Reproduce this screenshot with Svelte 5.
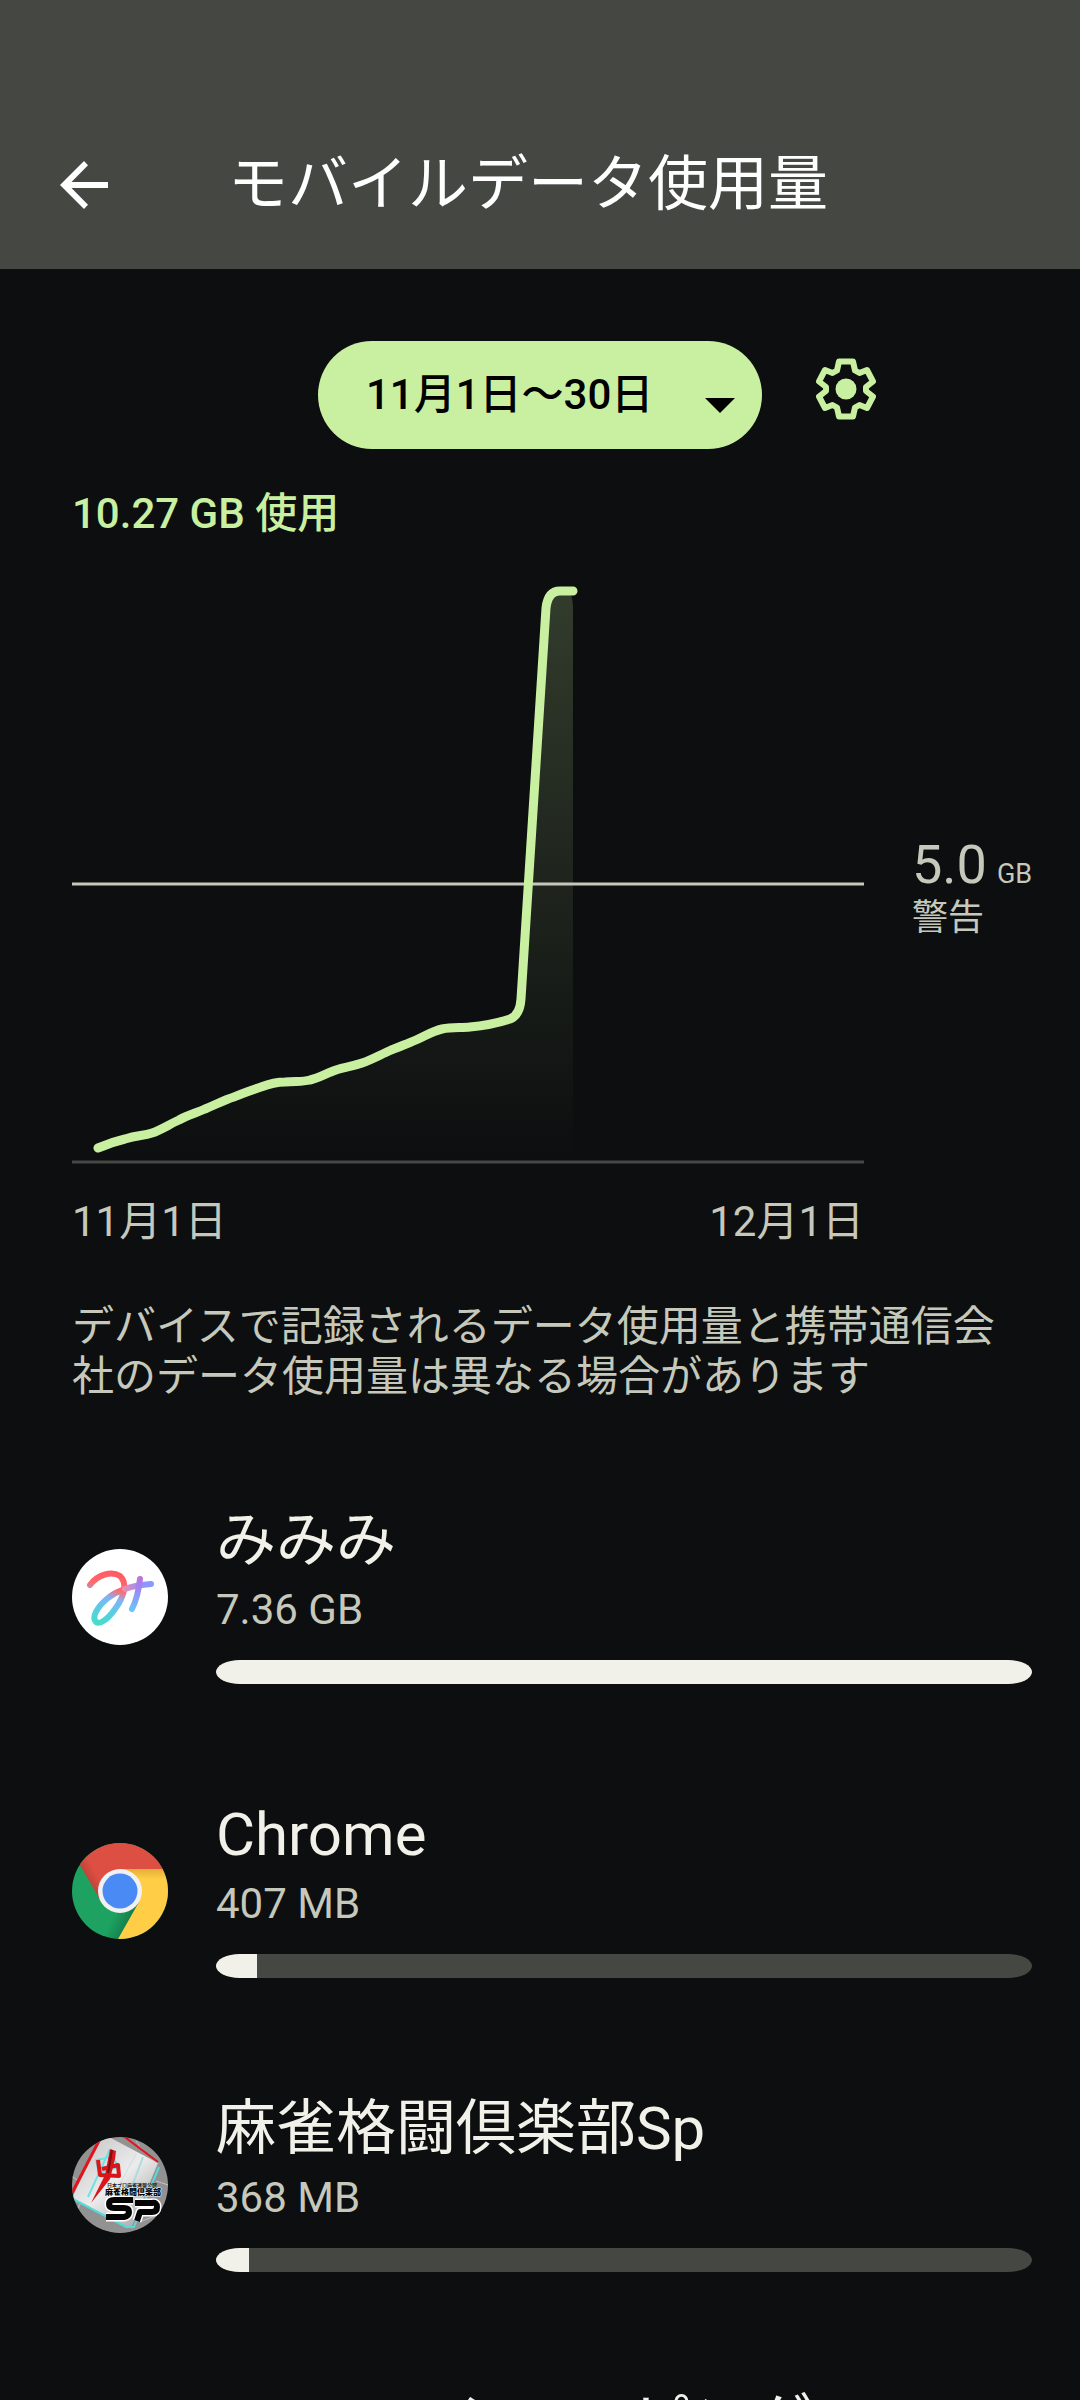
<script>
    const apps = [
        { name: 'みみみ', usage: '7.36 GB', percent: 100, icon: 'mimimi' },
        { name: 'Chrome', usage: '407 MB', percent: 5, icon: 'chrome' },
        { name: '麻雀格闘倶楽部Sp', usage: '368 MB', percent: 4, icon: 'mahjong' },
        { name: 'Amazon ショッピング', usage: '', percent: 0, icon: '' }
    ]
    const periods = ['11月1日～30日']
    const usageLine = 'M26 577Q40 571 53 568C66 564 71 565 80 562C89 559 98 553 107 549C116 544 124 542 133 538C143 534 152 529 162 526C171 522 180 519 189 516Q202 511 213 511C224 510 230 511 238 509C247 507 255 502 264 499C273 496 282 495 290 492C299 489 308 484 317 480C326 476 335 473 344 469C353 465 361 460 370 458C380 456 389 457 398 456Q420 454 438 448Q448 444 449 428L474 37Q476 20 488 20'
    let period = periods[0]
</script>

<div class="screen">
    <header>
        <button class="back" aria-label="戻る">
            <svg width="48" height="48" viewBox="0 0 48 48">
                <path d="M48 21H11.5L28 4.2 24 0 0 24 24 48 28 43.8 11.5 27H48Z" fill="#fff" />
            </svg>
        </button>
        <h1>モバイルデータ使用量</h1>
    </header>

    <main>
        <div class="cycle">
            <div class="picker">
                <select aria-label="期間" bind:value={period}>
                    {#each periods as item}
                        <option value={item}>{item}</option>
                    {/each}
                </select>
                <svg class="arrow" width="30" height="15" viewBox="0 0 30 15">
                    <path d="M0 0H30L15 15Z" fill="#000" />
                </svg>
            </div>
            <button class="settings" aria-label="設定">
                <svg width="60" height="62" viewBox="1 0 60 62" fill="none">
                    <path d="M24 3.5H38L40 12.5 44.5 15 52 12 58 23.5 51 29V33L58 38.5 52 50 44.5 47 40 49.5 38 58.5H24L22 49.5 17.5 47 10 50 4 38.5 11 33V29L4 23.5 10 12 17.5 15 22 12.5Z" stroke="#c8f0a0" stroke-width="6" stroke-linejoin="round" />
                    <circle cx="31" cy="31" r="10.5" fill="#c8f0a0" />
                </svg>
            </button>
        </div>

        <p class="total">10.27 GB 使用</p>

        <div class="chart">
            <svg class="plot" viewBox="0 0 792 600">
                <defs>
                    <linearGradient id="area" x1="0" y1="25" x2="0" y2="592" gradientUnits="userSpaceOnUse">
                        <stop offset="0" stop-color="#c8f0a0" stop-opacity="0.2" />
                        <stop offset="1" stop-color="#c8f0a0" stop-opacity="0" />
                    </linearGradient>
                </defs>
                <path d="{usageLine}H494Q501 21 501 38V592H26Z" fill="url(#area)" />
                <path d="M0 313H792" stroke="#c5c8ba" stroke-width="3" />
                <path d="M0 591H792" stroke="#454743" stroke-width="3" />
                <path d="{usageLine}H501" fill="none" stroke="#c8f0a0" stroke-width="9" stroke-linecap="round" stroke-linejoin="round" />
            </svg>
            <div class="limit">
                <div class="amount">5.0 <small>GB</small></div>
                <div>警告</div>
            </div>
            <div class="dates">
                <span>11月1日</span>
                <span>12月1日</span>
            </div>
        </div>

        <p class="note">デバイスで記録されるデータ使用量と携帯通信会社のデータ使用量は異なる場合があります</p>

        <ul>
            {#each apps as app}
                <li>
                    <div class="icon">
                        {#if app.icon === 'mimimi'}
                            <svg viewBox="0 0 96 96">
                                <defs>
                                    <linearGradient id="swash" x1="44" y1="24" x2="30" y2="76" gradientUnits="userSpaceOnUse">
                                        <stop offset="0" stop-color="#ff5c62" />
                                        <stop offset="0.3" stop-color="#ff6a70" />
                                        <stop offset="0.48" stop-color="#7eb4fa" />
                                        <stop offset="0.75" stop-color="#55cfe0" />
                                        <stop offset="1" stop-color="#48ddc8" />
                                    </linearGradient>
                                    <linearGradient id="bar" x1="50" y1="0" x2="80" y2="0" gradientUnits="userSpaceOnUse">
                                        <stop offset="0" stop-color="#f58ca5" />
                                        <stop offset="0.5" stop-color="#a58cf5" />
                                        <stop offset="1" stop-color="#829bff" />
                                    </linearGradient>
                                    <linearGradient id="stem" x1="68" y1="28" x2="61" y2="62" gradientUnits="userSpaceOnUse">
                                        <stop offset="0" stop-color="#b973dc" />
                                        <stop offset="0.4" stop-color="#9b8cf5" />
                                        <stop offset="1" stop-color="#64c8fa" />
                                    </linearGradient>
                                </defs>
                                <circle cx="48" cy="48" r="48" fill="#fff" />
                                <g fill="none" stroke-width="6" stroke-linecap="round">
                                    <path d="M18 36C26 25 40 22 48 27C56 34 52 48 43 60C36 70 28 76 24 73C19 68 26 57 36 49C43 43 48 42 53 40" stroke="url(#swash)" />
                                    <path d="M53 40Q64 36 79 35" stroke="url(#bar)" />
                                    <path d="M68 30Q66 48 60 60" stroke="url(#stem)" />
                                </g>
                            </svg>
                        {:else if app.icon === 'chrome'}
                            <svg viewBox="0 0 96 96">
                                <defs>
                                    <clipPath id="disc"><circle cx="48" cy="48" r="48" /></clipPath>
                                    <linearGradient id="redShade" x1="10" y1="38" x2="24" y2="30" gradientUnits="userSpaceOnUse">
                                        <stop offset="0" stop-color="#b33b30" />
                                        <stop offset="1" stop-color="#dd4f43" />
                                    </linearGradient>
                                    <linearGradient id="yellowShade" x1="0" y1="26" x2="0" y2="36" gradientUnits="userSpaceOnUse">
                                        <stop offset="0" stop-color="#e5ae37" />
                                        <stop offset="1" stop-color="#ffcd46" />
                                    </linearGradient>
                                    <linearGradient id="greenShade" x1="58" y1="76" x2="43" y2="69" gradientUnits="userSpaceOnUse">
                                        <stop offset="0" stop-color="#14804c" />
                                        <stop offset="1" stop-color="#1da261" />
                                    </linearGradient>
                                </defs>
                                <g clip-path="url(#disc)">
                                    <rect width="96" height="96" fill="url(#greenShade)" />
                                    <path d="M48 26H96V96H46L67 59Z" fill="url(#yellowShade)" />
                                    <path d="M0 10V0H96V26H48L30 60 8 22Z" fill="url(#redShade)" />
                                </g>
                                <circle cx="48" cy="48" r="22" fill="#f1f1f1" />
                                <circle cx="48" cy="48" r="17.5" fill="#4a8af4" />
                            </svg>
                        {:else if app.icon === 'mahjong'}
                            <svg viewBox="0 0 96 96">
                                <defs>
                                    <clipPath id="tile"><circle cx="48" cy="48" r="48" /></clipPath>
                                    <linearGradient id="face" x1="20" y1="10" x2="80" y2="80" gradientUnits="userSpaceOnUse">
                                        <stop offset="0" stop-color="#cfcfcf" />
                                        <stop offset="0.45" stop-color="#ececec" />
                                        <stop offset="1" stop-color="#a8a8a8" />
                                    </linearGradient>
                                </defs>
                                <g clip-path="url(#tile)">
                                    <rect width="96" height="96" fill="#929292" />
                                    <path d="M-2 38L30 60M0 82L12 60M64 4Q68 10 72 14M84 44L96 48M70 84L86 78" stroke="#c4c4c4" stroke-width="1" />
                                    <path d="M28 2L37 0 86 26 60 89 54 89 0 61Z" fill="url(#face)" />
                                    <path d="M64 17L32 76" stroke="#c9dede" stroke-width="1" />
                                    <path d="M71 20L47 84" stroke="#a9dcdc" stroke-width="2" />
                                    <path d="M1 62L54 90H62L87 30" stroke="#54dada" stroke-width="2" fill="none" />
                                    <path d="M29 0L0 56" stroke="#e3131d" stroke-width="3" />
                                    <path d="M50 -2L86 25" stroke="#e3131d" stroke-width="2" />
                                    <path d="M24 23L27 36 47 30 40 20ZM38 12L16 60" stroke="#6fe3e3" stroke-width="2" fill="none" />
                                    <path d="M26 23L28 38 47 39 46 28 30 32" stroke="#d9151c" stroke-width="4" fill="none" stroke-linejoin="round" />
                                    <path d="M38 12L44 14 43 22 38 42 19 66 33 38Z" fill="#d9151c" />
                                    <path d="M40 13L36 36" stroke="#791014" stroke-width="2" />
                                </g>
                                <text x="35" y="50" class="tiny">日本プロ麻雀連盟公認</text>
                                <text x="33" y="58" class="club">麻雀格闘倶楽部</text>
                                <g fill="none" stroke-linejoin="round">
                                    <path d="M61 63H42Q37 63 37 67T42 71H52Q57 71 57 75T52 80H34M65 84L68 75H80Q85 75 85 70T80 66H63" stroke="#fff" stroke-width="9" />
                                    <path d="M61 63H42Q37 63 37 67T42 71H52Q57 71 57 75T52 80H34M65 84L68 75H80Q85 75 85 70T80 66H63" stroke="#050505" stroke-width="6" />
                                </g>
                            </svg>
                        {/if}
                    </div>
                    <div class="details">
                        <h2>{app.name}</h2>
                        <p>{app.usage}</p>
                        <div class="track">
                            <div class="fill" style="width: {app.percent}%"></div>
                        </div>
                    </div>
                </li>
            {/each}
        </ul>
    </main>
</div>

<style>
    :global(body) {
        margin: 0;
        background: #0c0e0f;
    }
    .screen {
        height: 100vh;
        overflow: hidden;
        background: #0c0e0f;
        color: #c5c8ba;
        font-family: Roboto, "Noto Sans CJK JP", sans-serif;
        font-size: 42px;
        line-height: 50px;
    }
    h1, h2, p, ul {
        margin: 0;
        padding: 0;
        font-weight: 400;
    }
    button {
        padding: 0;
        border: none;
        background: none;
        cursor: pointer;
    }
    svg {
        display: block;
    }
    header {
        display: flex;
        align-items: center;
        gap: 120px;
        padding: 140px 60px 40px;
        background: #454743;
        color: #fff;
    }
    h1 {
        font-size: 60px;
        line-height: 89px;
    }
    .cycle {
        display: flex;
        align-items: center;
        justify-content: center;
        gap: 54px;
        padding: 72px 0 40px 114px;
    }
    .picker {
        position: relative;
    }
    .picker select {
        appearance: none;
        width: 444px;
        height: 108px;
        padding: 0 48px;
        border: none;
        border-radius: 54px;
        background: #c8f0a0;
        color: #000;
        font: inherit;
        font-weight: 500;
    }
    .picker .arrow {
        position: absolute;
        right: 27px;
        bottom: 36px;
        pointer-events: none;
    }
    .settings {
        margin-bottom: 12px;
    }
    .total {
        padding: 0 72px;
        color: #c8f0a0;
        font-weight: 500;
    }
    .chart {
        display: grid;
        grid-template-columns: 1fr 168px;
        column-gap: 48px;
        padding: 32px 0 0 72px;
    }
    .plot {
        width: 100%;
    }
    .limit {
        align-self: center;
        padding-top: 38px;
        font-size: 36px;
        line-height: 42px;
    }
    .amount {
        display: flex;
        align-items: baseline;
        gap: 10px;
        font-size: 54px;
        line-height: 46px;
    }
    .amount small {
        font-size: 27px;
    }
    .dates {
        display: flex;
        justify-content: space-between;
        padding-top: 26px;
    }
    .note {
        padding: 55px 72px 0;
    }
    ul {
        list-style: none;
        padding-top: 48px;
    }
    li {
        display: flex;
        align-items: center;
        gap: 48px;
        height: 294px;
        padding: 0 48px 0 72px;
    }
    .icon {
        flex: none;
        width: 96px;
        height: 96px;
    }
    .icon svg {
        width: 100%;
    }
    .tiny {
        font: 700 5px "Noto Sans CJK JP", sans-serif;
        fill: #222;
    }
    .club {
        font: 900 8px "Noto Sans CJK JP", sans-serif;
        fill: #000;
        stroke: #fff;
        stroke-width: 1px;
        paint-order: stroke;
    }
    .details {
        flex: 1;
        padding-bottom: 14px;
    }
    .details p {
        min-height: 50px;
    }
    h2 {
        color: #f1f1e9;
        font-size: 60px;
        line-height: 89px;
    }
    .track {
        height: 24px;
        margin-top: 25px;
        border-radius: 24px / 12px;
        background: #454743;
        overflow: hidden;
    }
    .fill {
        height: 100%;
        background: #f1f1e9;
    }
</style>
